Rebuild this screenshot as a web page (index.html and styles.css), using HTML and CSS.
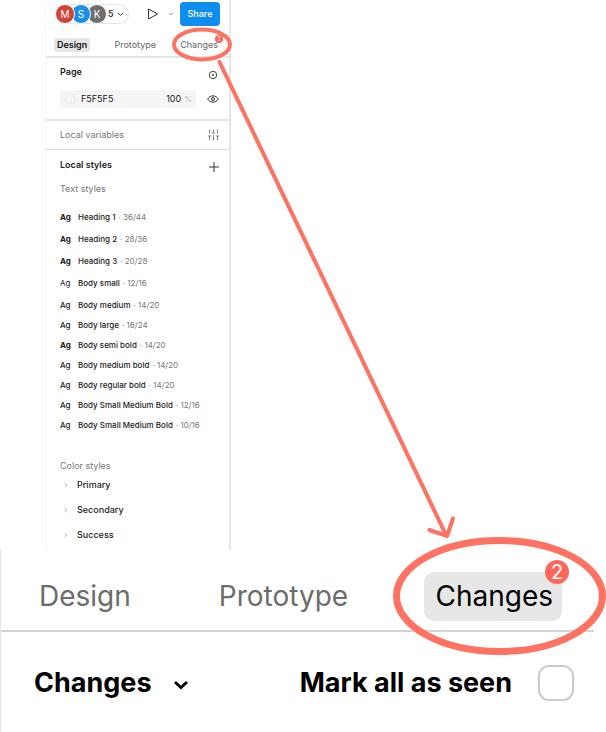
FILE: index.html
```html
<!DOCTYPE html>
<html lang="en">
<head>
<meta charset="utf-8">
<meta name="viewport" content="width=device-width, initial-scale=1">
<title>Changes tab</title>
<link rel="stylesheet" href="styles.css">
</head>
<body>
<main class="board">
  <section class="panel" aria-label="Design panel">
    <header class="toolbar">
      <div class="people">
        <span class="avatar avatar-m">M</span>
        <span class="avatar avatar-s">S</span>
        <span class="avatar avatar-k">K</span>
        <button class="count" type="button">5
          <svg width="7" height="5" viewBox="0 0 7 5"><path d="M1 1l2.5 2.5L6 1" fill="none" stroke="#444"/></svg>
        </button>
      </div>
      <button class="play" type="button" aria-label="Present">
        <svg width="12" height="12" viewBox="0 0 12 12"><path d="M1.500 1L10.500 6L1.500 11Z" fill="none" stroke="#333" stroke-linejoin="round"/></svg>
      </button>
      <button class="more" type="button" aria-label="Present options">
        <svg width="6" height="4" viewBox="0 0 6 4"><path d="M1 1l2 2 2-2" fill="none" stroke="#888" stroke-width=".8"/></svg>
      </button>
      <button class="share" type="button">Share</button>
    </header>
    <nav class="tabs">
      <button class="tab tab-on" type="button">Design</button>
      <button class="tab" type="button">Prototype</button>
      <button class="tab" type="button">Changes<span class="badge">2</span></button>
    </nav>
    <section class="page">
      <div class="line">
        <h2 class="title">Page</h2>
        <svg class="page-icon" width="10" height="10" viewBox="0 0 10 10"><circle cx="5" cy="5" r="3.700" fill="none" stroke="#333" stroke-width=".9"/><circle cx="5" cy="5" r=".9" fill="#333"/></svg>
      </div>
      <div class="fill">
        <div class="field">
          <span class="swatch"></span>
          <input class="hex" aria-label="Page colour" value="F5F5F5">
          <label class="opacity"><input class="percent" aria-label="Opacity" value="100"><span class="unit">%</span></label>
        </div>
        <svg width="12" height="8" viewBox="0 0 12 8"><path d="M.7 4C3.200-.2 8.800-.2 11.300 4C8.800 8.200 3.200 8.200.7 4Z" fill="none" stroke="#333"/><circle cx="6" cy="4" r="1.500" fill="none" stroke="#333"/></svg>
      </div>
    </section>
    <section class="variables line">
      <h2 class="muted">Local variables</h2>
      <svg width="11" height="12" viewBox="0 0 11 12"><path d="M1.500 .5v4M1.500 7v4.500M0 7h3M5.500 .5v3.500M5.500 6v5.500M4 4h3M9.500 .5v4M9.500 7v4.500M8 7h3" fill="none" stroke="#777" stroke-width=".9"/></svg>
    </section>
    <section class="styles">
      <div class="line local">
        <h2 class="title">Local styles</h2>
        <button class="add" type="button" aria-label="Add style"><svg width="10" height="10" viewBox="0 0 10 10"><path d="M5 0v10M0 5h10" stroke="#333"/></svg></button>
      </div>
      <h3 class="muted">Text styles</h3>
      <ul class="list list-loose">
        <li><b class="ag heavy">Ag</b><span class="name">Heading 1</span><span class="size">· 36/44</span></li>
        <li><b class="ag heavy">Ag</b><span class="name">Heading 2</span><span class="size">· 28/36</span></li>
        <li><b class="ag heavy">Ag</b><span class="name">Heading 3</span><span class="size">· 20/28</span></li>
        <li><b class="ag light">Ag</b><span class="name">Body small</span><span class="size">· 12/16</span></li>
      </ul>
      <ul class="list">
        <li><b class="ag">Ag</b><span class="name">Body medium</span><span class="size">· 14/20</span></li>
        <li><b class="ag">Ag</b><span class="name">Body large</span><span class="size">· 16/24</span></li>
        <li><b class="ag heavy">Ag</b><span class="name">Body semi bold</span><span class="size">· 14/20</span></li>
        <li><b class="ag">Ag</b><span class="name">Body medium bold</span><span class="size">· 14/20</span></li>
        <li><b class="ag">Ag</b><span class="name">Body regular bold</span><span class="size">· 14/20</span></li>
        <li><b class="ag">Ag</b><span class="name">Body Small Medium Bold</span><span class="size">· 12/16</span></li>
        <li><b class="ag">Ag</b><span class="name">Body Small Medium Bold</span><span class="size">· 10/16</span></li>
      </ul>
      <h3 class="muted color-title">Color styles</h3>
      <ul class="groups">
        <li><svg width="4" height="6" viewBox="0 0 4 6"><path d="M.5 1l2.500 2L.5 5" fill="none" stroke="#aaa" stroke-width=".8"/></svg>Primary</li>
        <li><svg width="4" height="6" viewBox="0 0 4 6"><path d="M.5 1l2.500 2L.5 5" fill="none" stroke="#aaa" stroke-width=".8"/></svg>Secondary</li>
        <li><svg width="4" height="6" viewBox="0 0 4 6"><path d="M.5 1l2.500 2L.5 5" fill="none" stroke="#aaa" stroke-width=".8"/></svg>Success</li>
      </ul>
    </section>
  </section>

  <section class="detail" aria-label="Changes panel">
    <nav class="big-tabs">
      <button class="big-tab big-first" type="button">Design</button>
      <button class="big-tab" type="button">Prototype</button>
      <button class="big-tab big-on" type="button">Changes<span class="big-badge">2</span></button>
    </nav>
    <div class="filter">
      <button class="filter-menu" type="button">Changes
        <svg width="16" height="10" viewBox="0 0 16 10"><path d="M2 2l6 5.500L14 2" fill="none" stroke="#000" stroke-width="2.800"/></svg>
      </button>
      <label class="seen">Mark all as seen<input class="check" type="checkbox"></label>
    </div>
  </section>

  <svg class="callout" width="606" height="732" viewBox="0 0 606 732" fill="none" stroke="#ff7262" aria-hidden="true">
    <ellipse cx="202" cy="44.500" rx="28" ry="15" stroke-width="4"/>
    <path d="M219.500 62L446 535M429.500 530L447 536L453 518.500" stroke-width="4" stroke-linecap="round" stroke-linejoin="round"/>
    <ellipse cx="499.500" cy="596" rx="103" ry="55.500" stroke-width="7"/>
  </svg>
</main>
</body>
</html>
```
FILE: styles.css
```css
* { box-sizing: border-box; }
body {
  margin: 0;
  background: #fff;
  color: #222;
  font-family: Inter, "Liberation Sans", sans-serif;
  font-size: 9px;
  line-height: 12px;
}
button, input {
  margin: 0;
  padding: 0;
  border: 0;
  background: none;
  color: inherit;
  font: inherit;
}
h2, h3, ul { margin: 0; padding: 0; font-size: inherit; }
ul { list-style: none; }
svg { display: block; flex: none; }

.board { position: relative; }
.panel {
  width: 30%;
  min-width: 186px;
  min-height: 550px;
  margin-left: 45px;
  border-left: 1px solid #f5f5f5;
  border-right: 2px solid #e6e6e6;
}

.toolbar {
  display: flex;
  align-items: center;
  height: 30px;
  padding: 0 9px 2px;
}
.people {
  display: flex;
  align-items: center;
  height: 20px;
  border: 1px solid #e6e6e6;
  border-left: 0;
  border-radius: 10px;
}
.avatar {
  display: grid;
  place-items: center;
  width: 20px;
  height: 20px;
  margin-right: -4px;
  border: 1px solid #fff;
  border-radius: 50%;
  color: #fff;
  font-size: 10px;
}
.avatar-m { background: #d04437; z-index: 3; }
.avatar-s { background: #1a8fe8; z-index: 2; }
.avatar-k { background: #6e6e6e; z-index: 1; }
.count {
  display: flex;
  align-items: center;
  gap: 3px;
  padding: 0 4px 0 5px;
  font-weight: 500;
}
.play { margin-left: 18px; }
.more { margin-left: 9px; }
.share {
  width: 40px;
  height: 24px;
  margin-left: auto;
  border-radius: 4px;
  background: #0d8ded;
  color: #fff;
  font-weight: 500;
}

.tabs {
  display: flex;
  align-items: center;
  justify-content: space-between;
  height: 28px;
  padding: 4px 11px 0 8px;
  border-bottom: 2px solid #e6e6e6;
  color: #666;
}
.tab { position: relative; height: 14px; }
.tab-on {
  padding: 0 3px;
  border-radius: 3px;
  background: #e6e6e6;
  color: #111;
  font-weight: 600;
}
.badge {
  position: absolute;
  top: -3px;
  right: -5px;
  width: 8px;
  height: 8px;
  border-radius: 50%;
  background: #ff6250;
  color: #fff;
  font-size: 6px;
  line-height: 8px;
}

.line { display: flex; align-items: center; justify-content: space-between; }
.title { font-weight: 600; }
.muted { color: #777; font-weight: 400; }
.page {
  height: 63px;
  padding: 8px 10px 0 14px;
  border-bottom: 2px solid #e6e6e6;
}
.page-icon { margin: 4px 1px 0 0; }
.page .line { align-items: flex-start; height: 16px; }
.fill {
  display: flex;
  align-items: center;
  justify-content: space-between;
  margin-top: 8px;
}
.field {
  display: flex;
  align-items: center;
  width: 136px;
  height: 18px;
  border-radius: 3px;
  background: #f5f5f5;
}
.swatch {
  width: 10px;
  height: 10px;
  margin: 0 6px 0 5px;
  border: 1px solid #eaeaea;
  border-radius: 2px;
}
.hex { flex: 1; min-width: 0; }
.opacity {
  display: flex;
  gap: 2px;
  height: 18px;
  padding: 3px 4px;
  border-left: 1px solid #fff;
  color: #bbb;
}
.percent { width: 16px; color: #222; }
.unit { font-size: 8px; }

.variables {
  height: 29px;
  padding: 0 10px 0 14px;
  border-bottom: 1px solid #e0e0e0;
}
.styles { padding: 8px 10px 0 14px; }
.local { height: 14px; margin-bottom: 11px; }
.add { margin-top: 4px; }
.list { margin-top: 1px; font-size: 8px; }
.list li { display: flex; align-items: center; height: 20px; }
.list-loose { margin-top: 11px; }
.list-loose li { height: 22px; }
.ag { width: 18px; flex: none; font-weight: 500; }
.heavy { font-weight: 700; }
.light { font-weight: 400; }
.name { font-weight: 500; white-space: nowrap; }
.size { margin-left: 3px; color: #777; white-space: nowrap; }
.color-title { margin-top: 25px; }
.groups li {
  display: flex;
  align-items: center;
  gap: 9px;
  height: 25px;
  padding-left: 4px;
  font-weight: 500;
}

.detail {
  min-height: 182px;
  border-left: 1px solid #e6e6e6;
  color: #000;
  font-size: 28px;
  line-height: 36px;
}
.big-tabs {
  display: flex;
  align-items: center;
  gap: 76px;
  height: 82px;
  margin-right: 12px;
  padding: 12px 32px 0 38px;
  border-bottom: 2px solid #d4d4d4;
  color: #6c6c6c;
}
.big-tab { position: relative; height: 49px; }
.big-first { margin-right: 12px; }
.big-on {
  margin-left: auto;
  padding: 0 9px 0 11px;
  border-radius: 10px;
  background: #e7e7e7;
  color: #000;
}
.big-badge {
  position: absolute;
  top: -12px;
  right: -7px;
  width: 24px;
  height: 24px;
  border-radius: 50%;
  background: #ff6858;
  color: #fff;
  font-size: 20px;
  line-height: 24px;
}
.filter {
  display: flex;
  align-items: center;
  justify-content: space-between;
  height: 100px;
  padding: 2px 32px 0 33px;
  font-size: 27px;
  font-weight: 700;
}
.filter-menu { display: flex; align-items: center; gap: 21px; }
.filter-menu svg { margin-top: 4px; }
.seen { display: flex; align-items: center; gap: 26px; }
.check {
  appearance: none;
  width: 36px;
  height: 36px;
  margin: 0;
  border: 2px solid #ccc;
  border-radius: 11px;
}
.callout { position: absolute; top: 0; left: 0; pointer-events: none; }
```
